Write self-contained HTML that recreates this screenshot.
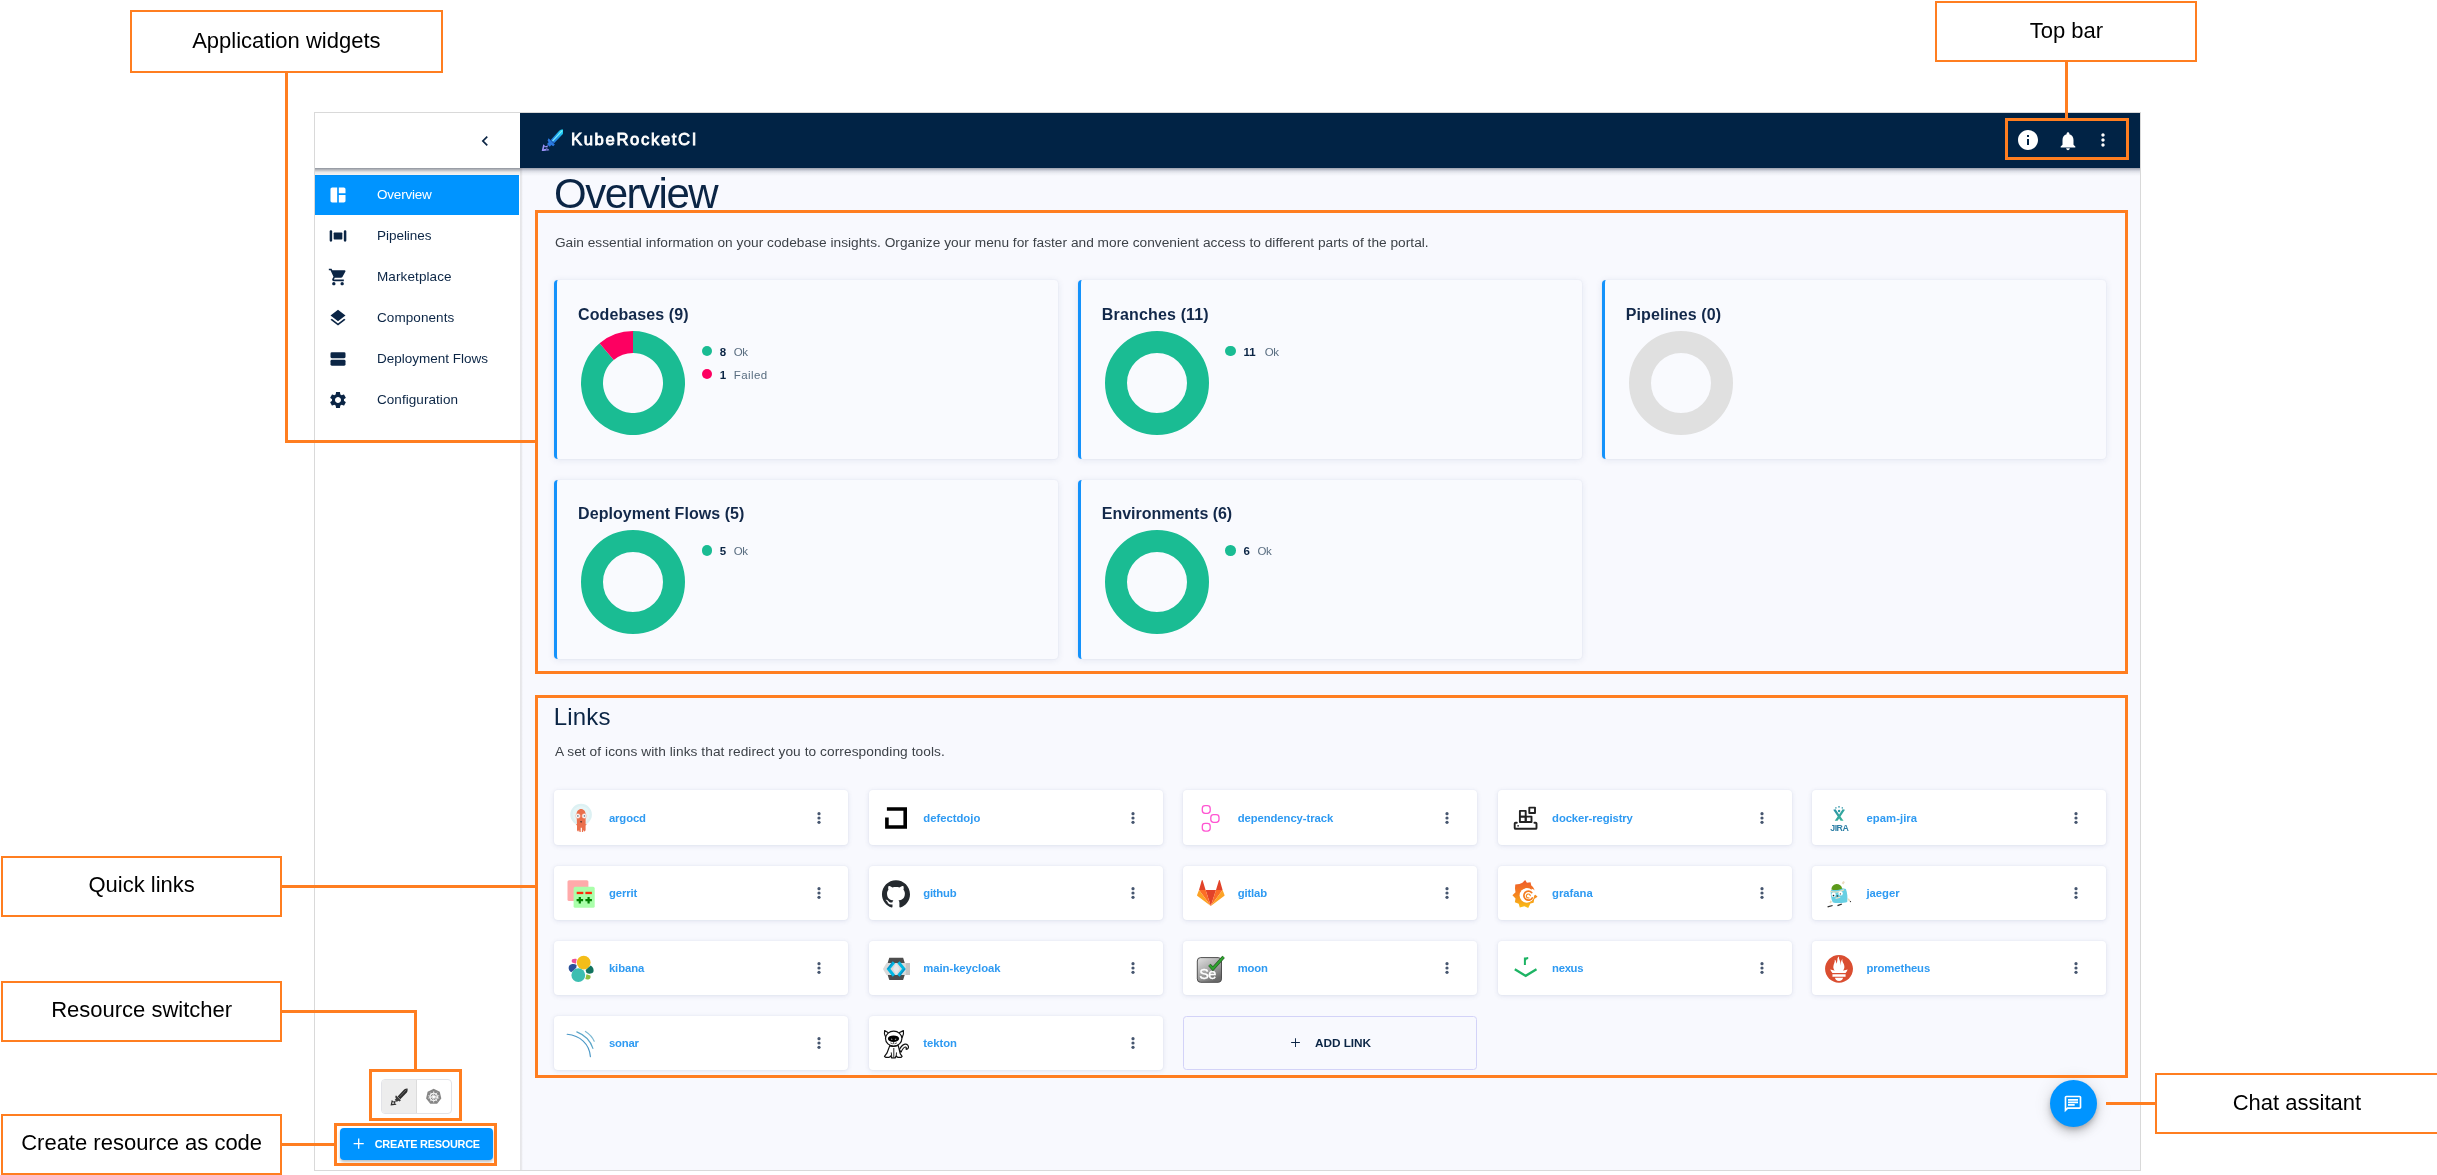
<!DOCTYPE html>
<html lang="en"><head><meta charset="utf-8"><title>KubeRocketCI Overview</title>
<style>
*{box-sizing:border-box;margin:0;padding:0}
html,body{width:2437px;height:1175px;background:#fff;overflow:hidden}
body{position:relative;font-family:"Liberation Sans",sans-serif;color:#0B2545;will-change:transform}
.abs{position:absolute}
.ann{position:absolute;border:2.4px solid #FF7E20;background:#fff;display:flex;align-items:center;justify-content:center;font-size:22px;color:#000;white-space:nowrap;padding-bottom:2.2px}
#a1{padding-bottom:.8px}
#a6{padding-bottom:0}
#a2{padding-bottom:.2px}
.ol{position:absolute;background:#FF7E20}
.ob{position:absolute;border:3px solid #FF7E20}
#app{position:absolute;left:314px;top:112px;width:1827px;height:1059px;border:1px solid #d9d9d9;background:#F8F9FE;overflow:hidden}
#side{position:absolute;left:0;top:0;width:205px;height:1057px;background:#fff}
#sideedge{position:absolute;left:204.9px;top:55px;width:3px;height:1002px;background:linear-gradient(to right,#E5E5E8 0,#E9E9EC 1.6px,#F3F4F9 2.4px,#F8F9FE 3px)}
#sidehead{position:absolute;left:0;top:0;width:205px;height:55px;background:#fff;}
#sideshadow{position:absolute;left:0;top:55px;width:205px;height:7.5px;background:linear-gradient(to bottom,rgba(66,74,90,.60) 0,rgba(70,78,92,.44) 1.4px,rgba(80,86,98,.30) 2.8px,rgba(0,0,0,.09) 4.1px,rgba(0,0,0,.06) 6px,rgba(0,0,0,.03) 7.5px)}
#topshadow{position:absolute;left:205px;top:55px;width:1620px;height:8px;background:linear-gradient(to bottom,rgba(40,50,75,.46) 0,rgba(40,50,75,.30) 1.5px,rgba(40,50,75,.14) 3.2px,rgba(40,50,75,.05) 5.5px,rgba(40,50,75,0) 8px)}
#top{position:absolute;left:205px;top:0;width:1620px;height:55px;background:#012345}
.mi{position:absolute;left:0;width:204px;height:40px;font-size:13.5px;color:#0B2545;line-height:40px;white-space:nowrap}
.mi span{position:absolute;left:62px;top:0}
.mi svg{position:absolute;left:13.4px;top:10.3px;width:20px;height:20px;fill:#0B2545}
.mi.sel{background:#0094FF;color:#fff}
.mi.sel svg{fill:#fff}
.t{position:absolute;white-space:nowrap;line-height:1}
.card{position:absolute;width:503.5px;height:179px;background:#F9FAFE;border-left:3px solid #1492FB;border-radius:4px;box-shadow:0 1px 7px rgba(40,60,120,.10),0 0 2px rgba(40,60,120,.07)}
.card .ttl{position:absolute;left:20.8px;top:24.6px;font-size:16px;font-weight:bold;color:#12284A;white-space:nowrap;line-height:20px}
.card svg.dn{position:absolute;left:23px;top:50px;width:106px;height:106px}
.lg{position:absolute;left:144px;height:14px;line-height:14px;font-size:11.5px;white-space:nowrap;color:#596D80}
.lg i{position:absolute;left:0.3px;top:1.9px;width:10.6px;height:10.6px;border-radius:50%}
.lg b{position:absolute;left:18.4px;top:0.9px;color:#0B2545;font-size:11.5px}
.lg span{position:absolute;top:0.9px}
.lk{position:absolute;width:294px;height:54.2px;background:#fff;border-radius:4px;box-shadow:0 1px 5px rgba(40,60,120,.12),0 0 2px rgba(40,60,120,.06)}
.lk .nm{position:absolute;left:54.5px;top:0.9px;line-height:54px;font-size:11.3px;font-weight:bold;color:#2E9AF2;white-space:nowrap}
.lk svg.dots{position:absolute;left:256.2px;top:19.4px;width:16px;height:16px;fill:#46566F}
.lk svg.ic{position:absolute;left:0;top:0;width:54px;height:54px}
</style></head>
<body>
<div id="app">
<div id="side">
<div class="mi sel" style="top:62.20px"><svg viewBox="0 0 24 24"><path d="M11 21H5c-1.1 0-2-.9-2-2V5c0-1.1.9-2 2-2h6v18zm2 0h6c1.1 0 2-.9 2-2v-7h-8v9zm8-11V5c0-1.1-.9-2-2-2h-6v7h8z"/></svg><span style="letter-spacing:-0.209px">Overview</span></div>
<div class="mi" style="top:103.05px"><svg viewBox="0 0 24 24"><rect x="2" y="5.2" width="3" height="13.6" rx="1.4"/><rect x="19" y="5.2" width="3" height="13.6" rx="1.4"/><rect x="6.8" y="7.8" width="10.4" height="8.4" rx="0.8"/></svg><span style="letter-spacing:-0.036px">Pipelines</span></div>
<div class="mi" style="top:143.90px"><svg viewBox="0 0 24 24"><path d="M7 18c-1.1 0-1.99.9-1.99 2S5.9 22 7 22s2-.9 2-2-.9-2-2-2zM1 2v2h2l3.6 7.59-1.35 2.45c-.16.28-.25.61-.25.96 0 1.1.9 2 2 2h12v-2H7.42c-.14 0-.25-.11-.25-.25l.03-.12.9-1.63h7.45c.75 0 1.41-.41 1.75-1.03l3.58-6.49c.08-.14.12-.31.12-.48 0-.55-.45-1-1-1H5.21l-.94-2H1zm16 16c-1.1 0-1.99.9-1.99 2s.89 2 1.99 2 2-.9 2-2-.9-2-2-2z"/></svg><span style="letter-spacing:0.107px">Marketplace</span></div>
<div class="mi" style="top:184.75px"><svg viewBox="0 0 24 24"><path d="M11.99 18.54l-7.37-5.73L3 14.07l9 7 9-7-1.63-1.27-7.38 5.74zM12 16l7.36-5.73L21 9l-9-7-9 7 1.63 1.27L12 16z"/></svg><span style="letter-spacing:0.084px">Components</span></div>
<div class="mi" style="top:225.60px"><svg viewBox="0 0 24 24"><rect x="3" y="4" width="18" height="7" rx="1.6"/><rect x="3" y="13" width="18" height="7" rx="1.6"/></svg><span style="letter-spacing:-0.009px">Deployment Flows</span></div>
<div class="mi" style="top:266.95px"><svg viewBox="0 0 24 24"><path d="M19.14 12.94c.04-.3.06-.61.06-.94 0-.32-.02-.64-.07-.94l2.03-1.58c.18-.14.23-.41.12-.61l-1.92-3.32c-.12-.22-.37-.29-.59-.22l-2.39.96c-.5-.38-1.03-.7-1.62-.94l-.36-2.54c-.04-.24-.24-.41-.48-.41h-3.84c-.24 0-.43.17-.47.41l-.36 2.54c-.59.24-1.13.57-1.62.94l-2.39-.96c-.22-.08-.47 0-.59.22L2.74 8.87c-.12.21-.08.47.12.61l2.03 1.58c-.05.3-.09.63-.09.94s.02.64.07.94l-2.03 1.58c-.18.14-.23.41-.12.61l1.92 3.32c.12.22.37.29.59.22l2.39-.96c.5.38 1.03.7 1.62.94l.36 2.54c.05.24.24.41.48.41h3.84c.24 0 .44-.17.47-.41l.36-2.54c.59-.24 1.13-.56 1.62-.94l2.39.96c.22.08.47 0 .59-.22l1.92-3.32c.12-.22.07-.47-.12-.61l-2.01-1.58zM12 15.6c-1.98 0-3.6-1.62-3.6-3.6s1.62-3.6 3.6-3.6 3.6 1.62 3.6 3.6-1.62 3.6-3.6 3.6z"/></svg><span style="letter-spacing:0.058px">Configuration</span></div>
<div id="sidehead"><svg class="abs" style="left:160.3px;top:18px;width:20px;height:20px" viewBox="0 0 24 24" fill="#0B2545"><path d="M15.41 7.41L14 6l-6 6 6 6 1.41-1.41L10.83 12z"/></svg></div>
<div id="sideshadow"></div>
</div>
<div class="t" id="h1" style="left:239.10000000000002px;top:59.5px;font-size:42px;color:#0B2545;letter-spacing:-1.5px">Overview</div>
<div class="t" id="desc" style="left:239.89999999999998px;top:122.80000000000001px;font-size:13.7px;letter-spacing:0.02px;color:#3d4248">Gain essential information on your codebase insights. Organize your menu for faster and more convenient access to different parts of the portal.</div>
<div class="card" style="left:239.29999999999995px;top:167px"><div class="abs" style="left:0;top:0px;width:100%;height:100%"><div class="ttl" style="letter-spacing:0.094px">Codebases (9)</div><svg class="dn" viewBox="0 0 106 106"><path d="M53.00 1.00A52 52 0 1 1 19.58 13.17L33.72 30.02A30 30 0 1 0 53.00 23.00Z" fill="#1ABC93"/><path d="M19.58 13.17A52 52 0 0 1 53.00 1.00L53.00 23.00A30 30 0 0 0 33.72 30.02Z" fill="#FD0061"/></svg><div class="lg" style="top:64px"><i style="background:#1ABC93"></i><b>8</b><span style="left:32.5px;letter-spacing:-0.395px">Ok</span></div><div class="lg" style="top:86.7px"><i style="background:#FD0061"></i><b>1</b><span style="left:32.5px;letter-spacing:0.416px">Failed</span></div></div></div>
<div class="card" style="left:763px;top:167px"><div class="abs" style="left:0;top:0px;width:100%;height:100%"><div class="ttl" style="letter-spacing:0.163px">Branches (11)</div><svg class="dn" viewBox="0 0 106 106"><circle cx="53" cy="53" r="41.0" fill="none" stroke="#1ABC93" stroke-width="22"/></svg><div class="lg" style="top:64px"><i style="background:#1ABC93"></i><b>11</b><span style="left:39.8px;letter-spacing:-0.395px">Ok</span></div></div></div>
<div class="card" style="left:1287px;top:167px"><div class="abs" style="left:0;top:0px;width:100%;height:100%"><div class="ttl" style="letter-spacing:0.087px">Pipelines (0)</div><svg class="dn" viewBox="0 0 106 106"><circle cx="53" cy="53" r="41.0" fill="none" stroke="#E0E0E0" stroke-width="22"/></svg></div></div>
<div class="card" style="left:239.29999999999995px;top:367px"><div class="abs" style="left:0;top:-0.9px;width:100%;height:100%"><div class="ttl" style="letter-spacing:0.045px">Deployment Flows (5)</div><svg class="dn" viewBox="0 0 106 106"><circle cx="53" cy="53" r="41.0" fill="none" stroke="#1ABC93" stroke-width="22"/></svg><div class="lg" style="top:64px"><i style="background:#1ABC93"></i><b>5</b><span style="left:32.5px;letter-spacing:-0.395px">Ok</span></div></div></div>
<div class="card" style="left:763px;top:367px"><div class="abs" style="left:0;top:-0.9px;width:100%;height:100%"><div class="ttl" style="letter-spacing:-0.019px">Environments (6)</div><svg class="dn" viewBox="0 0 106 106"><circle cx="53" cy="53" r="41.0" fill="none" stroke="#1ABC93" stroke-width="22"/></svg><div class="lg" style="top:64px"><i style="background:#1ABC93"></i><b>6</b><span style="left:32.5px;letter-spacing:-0.395px">Ok</span></div></div></div>
<div class="t" id="h2" style="left:238.70000000000005px;top:592px;font-size:24px;letter-spacing:0.2px;color:#0B2545">Links</div>
<div class="t" id="desc2" style="left:239.89999999999998px;top:632.3px;font-size:13.7px;letter-spacing:0.074px;color:#3d4248">A set of icons with links that redirect you to corresponding tools.</div>
<div class="lk" style="left:239.4px;top:676.9px;height:55.1px"><svg class="ic" style="top:0.1px" viewBox="0 0 54 54"><circle cx="27.1" cy="24.6" r="10.8" fill="#DDF1F3"/><circle cx="27.1" cy="24.6" r="8.6" fill="#E6F5F6"/>
<path d="M22.6 24.5c0-3.2 1.9-5.5 4.5-5.5s4.5 2.3 4.5 5.5v9.8h1.3l-1.3 1.1v4.8l-1.1 1.5-.9-1.6-.6 1.8h-1.1v-4.2h-1.2v4.2h-1.1l-.6-1.8-.9 1.6-1.1-1.5v-4.8l-1.3-1.1h1.3z" fill="#EA6F4C"/>
<circle cx="23.9" cy="26" r="2.3" fill="#fff" stroke="#F6B7A6" stroke-width=".6"/><circle cx="30.3" cy="26" r="2.3" fill="#fff" stroke="#F6B7A6" stroke-width=".6"/>
<rect x="23.1" y="25.1" width="1.5" height="1.7" fill="#7b8794"/><rect x="29.7" y="25.1" width="1.5" height="1.7" fill="#7b8794"/>
<path d="M26 31.2h2.2l-1.1 1.7z" fill="#3a2a2a"/></svg><div class="nm" style="top:1.0px;letter-spacing:-0.115px">argocd</div><svg class="dots" style="top:20.15px" viewBox="0 0 16 16"><circle cx="8" cy="3.7" r="1.6"/><circle cx="8" cy="8" r="1.6"/><circle cx="8" cy="12.3" r="1.6"/></svg></div>
<div class="lk" style="left:553.8px;top:676.9px;height:55.1px"><svg class="ic" style="top:0.1px" viewBox="0 0 54 54"><path d="M17.9 19H36.2V37H17.9V27.6" fill="none" stroke="#000" stroke-width="3.6" stroke-linejoin="miter"/></svg><div class="nm" style="top:1.0px;letter-spacing:-0.014px">defectdojo</div><svg class="dots" style="top:20.15px" viewBox="0 0 16 16"><circle cx="8" cy="3.7" r="1.6"/><circle cx="8" cy="8" r="1.6"/><circle cx="8" cy="12.3" r="1.6"/></svg></div>
<div class="lk" style="left:868.2px;top:676.9px;height:55.1px"><svg class="ic" style="top:0.1px" viewBox="0 0 54 54"><g fill="none" stroke="#FF55D2" stroke-width="1.3"><rect x="19.3" y="15.7" width="7.9" height="7.7" rx="2.8"/><rect x="27.8" y="24.6" width="8.2" height="7.7" rx="2.8"/><rect x="19.3" y="33.4" width="7.9" height="7.7" rx="2.8"/></g></svg><div class="nm" style="top:1.0px;letter-spacing:-0.081px">dependency-track</div><svg class="dots" style="top:20.15px" viewBox="0 0 16 16"><circle cx="8" cy="3.7" r="1.6"/><circle cx="8" cy="8" r="1.6"/><circle cx="8" cy="12.3" r="1.6"/></svg></div>
<div class="lk" style="left:1182.6px;top:676.9px;height:55.1px"><svg class="ic" style="top:0.1px" viewBox="0 0 54 54"><g fill="none" stroke="#222" stroke-width="1.9" stroke-linejoin="round" stroke-linecap="round"><path d="M18.8 32.7h-1.2a.9.9 0 0 0-.9.9v4.3a.9.9 0 0 0 .9.9h20a.9.9 0 0 0 .9-.9v-4.3a.9.9 0 0 0-.9-.9h-1.2"/><rect x="21.9" y="20.9" width="5.8" height="5.7"/><rect x="21.9" y="26.6" width="5.8" height="5.4"/><rect x="27.7" y="26.6" width="5.8" height="5.4"/><rect x="31.3" y="17.6" width="5.7" height="5.4"/></g><circle cx="20.1" cy="35.8" r=".9" fill="#222"/></svg><div class="nm" style="top:1.0px;letter-spacing:-0.105px">docker-registry</div><svg class="dots" style="top:20.15px" viewBox="0 0 16 16"><circle cx="8" cy="3.7" r="1.6"/><circle cx="8" cy="8" r="1.6"/><circle cx="8" cy="12.3" r="1.6"/></svg></div>
<div class="lk" style="left:1497.0px;top:676.9px;height:55.1px"><svg class="ic" style="top:0.1px" viewBox="0 0 54 54"><defs><linearGradient id="jg" x1="0" y1="0" x2="1" y2="1"><stop offset="0" stop-color="#2A8FA9"/><stop offset="1" stop-color="#3DBB96"/></linearGradient></defs>
<path d="M21.2 19.8l2.4-.6 3.5 5.3 3.5-5.3 2.4.6-4.5 6.8 3 4.2h-2.9l-1.5-2.3-1.5 2.3h-2.9l3-4.2z" fill="url(#jg)"/><circle cx="27.1" cy="21" r="1.2" fill="#2A9DA8"/>
<circle cx="23.9" cy="17.9" r=".8" fill="#4BA5B5"/><circle cx="27" cy="16.8" r=".9" fill="#3E9CB0"/><circle cx="30.3" cy="17.9" r=".8" fill="#4BA5B5"/>
<text x="27.3" y="40.9" text-anchor="middle" font-family="Liberation Sans, sans-serif" font-size="8.8" font-weight="bold" fill="#2D7FA6" letter-spacing="-.5">JIRA</text></svg><div class="nm" style="top:1.0px;letter-spacing:0.045px">epam-jira</div><svg class="dots" style="top:20.15px" viewBox="0 0 16 16"><circle cx="8" cy="3.7" r="1.6"/><circle cx="8" cy="8" r="1.6"/><circle cx="8" cy="12.3" r="1.6"/></svg></div>
<div class="lk" style="left:239.4px;top:752.8px;height:54.2px"><svg class="ic" style="top:0.1px" viewBox="0 0 54 54"><rect x="13.5" y="14.2" width="20.9" height="20.9" rx="1.6" fill="#FFAAAA"/><rect x="19.6" y="20.8" width="21.1" height="21" rx="1.6" fill="#AAFFAA"/>
<rect x="22.7" y="25.8" width="6.6" height="2.3" fill="#FF2A0A"/><rect x="31.4" y="25.8" width="6.5" height="2.3" fill="#FF2A0A"/>
<path d="M22.6 33.1h2.1v-2.2h2.2v2.2h2.2v2.2h-2.2v2.2h-2.2v-2.2h-2.1zM31.4 33.1h2.1v-2.2h2.2v2.2h2.2v2.2h-2.2v2.2h-2.2v-2.2h-2.1z" fill="#007F00"/></svg><div class="nm" style="top:0.1px;letter-spacing:-0.097px">gerrit</div><svg class="dots" style="top:19.70px" viewBox="0 0 16 16"><circle cx="8" cy="3.7" r="1.6"/><circle cx="8" cy="8" r="1.6"/><circle cx="8" cy="12.3" r="1.6"/></svg></div>
<div class="lk" style="left:553.8px;top:752.8px;height:54.2px"><svg class="ic" style="top:0.1px" viewBox="0 0 54 54"><g transform="translate(12.95 13.8) scale(1.169)"><path d="M12 .297c-6.63 0-12 5.373-12 12 0 5.303 3.438 9.8 8.205 11.385.6.113.82-.258.82-.577 0-.285-.01-1.04-.015-2.04-3.338.724-4.042-1.61-4.042-1.61C4.422 18.07 3.633 17.7 3.633 17.7c-1.087-.744.084-.729.084-.729 1.205.084 1.838 1.236 1.838 1.236 1.07 1.835 2.809 1.305 3.495.998.108-.776.417-1.305.76-1.605-2.665-.3-5.466-1.332-5.466-5.93 0-1.31.465-2.38 1.235-3.22-.135-.303-.54-1.523.105-3.176 0 0 1.005-.322 3.3 1.23.96-.267 1.98-.399 3-.405 1.02.006 2.04.138 3 .405 2.28-1.552 3.285-1.23 3.285-1.23.645 1.653.24 2.873.12 3.176.765.84 1.23 1.91 1.23 3.22 0 4.61-2.805 5.625-5.475 5.92.42.36.81 1.096.81 2.22 0 1.606-.015 2.896-.015 3.286 0 .315.21.69.825.57C20.565 22.092 24 17.592 24 12.297c0-6.627-5.373-12-12-12" fill="#24292E"/></g></svg><div class="nm" style="top:0.1px;letter-spacing:-0.243px">github</div><svg class="dots" style="top:19.70px" viewBox="0 0 16 16"><circle cx="8" cy="3.7" r="1.6"/><circle cx="8" cy="8" r="1.6"/><circle cx="8" cy="12.3" r="1.6"/></svg></div>
<div class="lk" style="left:868.2px;top:752.8px;height:54.2px"><svg class="ic" style="top:0.1px" viewBox="0 0 54 54"><path d="M27.8 40L22.6 23.9H33z" fill="#E24329"/><path d="M27.8 40L22.6 23.9H16z" fill="#FC6D26"/><path d="M16 23.9l-1.9 5a1.1 1.1 0 0 0 .4 1.2L27.8 40z" fill="#FCA326"/><path d="M16 23.9h6.6L19.7 14.6a.5.5 0 0 0-1 0z" fill="#E24329"/>
<path d="M27.8 40L33 23.9h6.6z" fill="#FC6D26"/><path d="M39.6 23.9l1.9 5a1.1 1.1 0 0 1-.4 1.2L27.8 40z" fill="#FCA326"/><path d="M39.6 23.9H33l2.9-9.3a.5.5 0 0 1 1 0z" fill="#E24329"/></svg><div class="nm" style="top:0.1px;letter-spacing:-0.146px">gitlab</div><svg class="dots" style="top:19.70px" viewBox="0 0 16 16"><circle cx="8" cy="3.7" r="1.6"/><circle cx="8" cy="8" r="1.6"/><circle cx="8" cy="12.3" r="1.6"/></svg></div>
<div class="lk" style="left:1182.6px;top:752.8px;height:54.2px"><svg class="ic" style="top:0.1px" viewBox="0 0 54 54"><defs><linearGradient id="gg" x1="0" y1="0" x2="0" y2="1"><stop offset="0" stop-color="#EE5A2B"/><stop offset=".5" stop-color="#F58220"/><stop offset="1" stop-color="#F9C016"/></linearGradient></defs>
<g transform="matrix(1.096 0 0 1.037 -4.41 -.51)"><path d="M28.8 14l1.6 2.6 3.3-.4.7 3c1.6 1.2 2.6 2.9 3 4.9l-1 2.3 3.7 3.7-3 2.2-.6 3.7-2.9.6-2 4.4-3.5-1.6-4.2 1.2-1-3.6-3.5-1.5.6-3.7-2.8-3 2.8-3-.5-3.5.3-4 3.8-.4 2.7-1.3z" fill="url(#gg)"/></g>
<circle cx="28.9" cy="29.4" r="7.3" fill="#fff"/><path d="M33.5 22.8c2.3.5 4.3 2.1 5.3 4.3l-1.9 2.3-3.1-1.7z" fill="#fff"/>
<path d="M34.3 31.9a4.5 4.5 0 1 1-.6-5.3" fill="none" stroke="#F47B20" stroke-width="1.7" stroke-linecap="round"/><path d="M32.3 29.6a2 2 0 1 0-1.3 2.3" fill="none" stroke="#F58A1F" stroke-width="1.2" stroke-linecap="round"/></svg><div class="nm" style="top:0.1px;letter-spacing:-0.037px">grafana</div><svg class="dots" style="top:19.70px" viewBox="0 0 16 16"><circle cx="8" cy="3.7" r="1.6"/><circle cx="8" cy="8" r="1.6"/><circle cx="8" cy="12.3" r="1.6"/></svg></div>
<div class="lk" style="left:1497.0px;top:752.8px;height:54.2px"><svg class="ic" style="top:0.1px" viewBox="0 0 54 54"><path d="M18.9 24.3c3.4-2.2 12-2.8 15-1.3 1.4 3.5 2 9.3 1.3 13-3.5 1.3-11 1.5-14.5.2-1.6-3.3-2.3-8.4-1.8-11.9z" fill="#67CFE3"/>
<path d="M19.3 23.4c.4-3.3 2.7-5.4 5.3-5.3 2.7.1 5 1.8 5.6 4.3-3 1.6-7.6 2-10.9 1z" fill="#5C9A1B"/><path d="M18.2 24.7c3.7 1.3 9.4.8 13.6-1.7l.4 1.2c-4 2.5-9.8 3.1-13.8 1.9z" fill="#E9DCC0"/>
<circle cx="21.6" cy="28.7" r="2.2" fill="#fff"/><circle cx="28.6" cy="27.4" r="2.2" fill="#fff"/><circle cx="21.5" cy="29.6" r=".8" fill="#222"/><circle cx="28.4" cy="27.9" r=".7" fill="#555"/><ellipse cx="25.4" cy="30" rx="1" ry=".7" fill="#3a3a3a"/><path d="M23.3 31.7l4.8-1 .2 1-4.6 1.2z" fill="#EFE3CA"/>
<path d="M29.7 17.2l1.5-2.1 1.7 1-1.5 2.5zM35.2 32.3l2 .4 1.5 2.7-1.8-.2zM18.7 34.2l-1.2 2.4 1.5 1 .8-2z" fill="#EADBBE"/><circle cx="38.5" cy="35.6" r=".6" fill="#222"/>
<path d="M15.4 40.3l5-1.4.4 1-5 1.5zM25.2 39.1l4.3-1.7.7 1.2-4.4 1.6z" fill="#333"/></svg><div class="nm" style="top:0.1px;letter-spacing:-0.039px">jaeger</div><svg class="dots" style="top:19.70px" viewBox="0 0 16 16"><circle cx="8" cy="3.7" r="1.6"/><circle cx="8" cy="8" r="1.6"/><circle cx="8" cy="12.3" r="1.6"/></svg></div>
<div class="lk" style="left:239.4px;top:827.8px;height:54.2px"><svg class="ic" style="top:0.2px" viewBox="0 0 54 54"><circle cx="29.7" cy="21.6" r="6.9" fill="#F4BD19"/><circle cx="24.3" cy="34.1" r="6.9" fill="#3CBEB1"/>
<path d="M18.4 18.3c1.2-.7 2.9-.8 4.3-.3l-.8 4.8-3.6-1.3c-.8-1-.8-2.4.1-3.2z" fill="#EE5097"/>
<path d="M15.1 25c1.5-2.2 5.3-2.6 7.5-.9l-.3 2.7-5 4.4c-2.2-1-3.3-4-2.2-6.2z" fill="#2B5099"/>
<path d="M36.7 24.5c2.3 1.2 3.5 4.2 2.7 6.6-1.5 2-4.7 2.2-7 .7l-.8-2.8z" fill="#12735E"/>
<path d="M32.5 33.3l3.8 1.1c.6 1.2.3 2.7-.8 3.5-1.4.7-3 .7-4.2.1z" fill="#8FBF3F"/></svg><div class="nm" style="top:0.1px;letter-spacing:-0.06px">kibana</div><svg class="dots" style="top:19.70px" viewBox="0 0 16 16"><circle cx="8" cy="3.7" r="1.6"/><circle cx="8" cy="8" r="1.6"/><circle cx="8" cy="12.3" r="1.6"/></svg></div>
<div class="lk" style="left:553.8px;top:827.8px;height:54.2px"><svg class="ic" style="top:0.2px" viewBox="0 0 54 54"><path d="M20.3 16.8h13.8l3.6 11.1-3.6 11.1H20.3l-3.6-11.1z" fill="#4D4D4D"/>
<path d="M13.9 27.9l3.6-5.9H41v12H17.5z" fill="#D9D9D9"/><path d="M36.8 22H41v12h-4.2z" fill="#C4C4C4"/><path d="M27.2 22.6l3.4 5.3-3.4 5.3-3.4-5.3z" fill="#E8E8E8"/>
<path d="M24.9 21.3l-5.4 6.6 5.4 6.8" fill="none" stroke="#00B8E3" stroke-width="3"/><path d="M29.5 21.3l5.4 6.6-5.4 6.8" fill="none" stroke="#00B8E3" stroke-width="3"/>
<path d="M23.4 21.8l-4.7 6.1" fill="none" stroke="#0B8DC4" stroke-width="1.1"/><path d="M31 34.2l4.7-6.3" fill="none" stroke="#0B8DC4" stroke-width="1.1"/></svg><div class="nm" style="top:0.1px;letter-spacing:-0.057px">main-keycloak</div><svg class="dots" style="top:19.70px" viewBox="0 0 16 16"><circle cx="8" cy="3.7" r="1.6"/><circle cx="8" cy="8" r="1.6"/><circle cx="8" cy="12.3" r="1.6"/></svg></div>
<div class="lk" style="left:868.2px;top:827.8px;height:54.2px"><svg class="ic" style="top:0.2px" viewBox="0 0 54 54"><defs><linearGradient id="sg" x1="0" y1="0" x2=".6" y2="1"><stop offset="0" stop-color="#E3E3E3"/><stop offset=".55" stop-color="#A9A9A9"/><stop offset="1" stop-color="#6A6A6A"/></linearGradient></defs>
<rect x="14.3" y="16.6" width="24.2" height="24.7" rx="3.4" fill="url(#sg)" stroke="#4f4f4f" stroke-width="1"/>
<text x="16.2" y="38.3" font-family="Liberation Sans, sans-serif" font-size="14.5" fill="#fff" stroke="#fff" stroke-width=".35" letter-spacing="-.6">Se</text>
<path d="M26.4 23.9l3.5 3.8L40.6 15.9" fill="none" stroke="#2a5a2a" stroke-width="3.3"/><path d="M26.4 23.9l3.5 3.8L40.6 15.9" fill="none" stroke="#2FA42F" stroke-width="2.1"/></svg><div class="nm" style="top:0.1px;letter-spacing:-0.185px">moon</div><svg class="dots" style="top:19.70px" viewBox="0 0 16 16"><circle cx="8" cy="3.7" r="1.6"/><circle cx="8" cy="8" r="1.6"/><circle cx="8" cy="12.3" r="1.6"/></svg></div>
<div class="lk" style="left:1182.6px;top:827.8px;height:54.2px"><svg class="ic" style="top:0.2px" viewBox="0 0 54 54"><path d="M16.8 28.2l10.9 6.6 10.8-6.6" fill="none" stroke="#1DB464" stroke-width="2.3"/><path d="M26.9 23.9v-7.5M26.9 19.5c.3-1.4 1.7-2.3 3.3-2.4" fill="none" stroke="#1DB464" stroke-width="2"/></svg><div class="nm" style="top:0.1px;letter-spacing:-0.315px">nexus</div><svg class="dots" style="top:19.70px" viewBox="0 0 16 16"><circle cx="8" cy="3.7" r="1.6"/><circle cx="8" cy="8" r="1.6"/><circle cx="8" cy="12.3" r="1.6"/></svg></div>
<div class="lk" style="left:1497.0px;top:827.8px;height:54.2px"><svg class="ic" style="top:0.2px" viewBox="0 0 54 54"><g transform="translate(13.05 13.9) scale(1.164)"><path d="M12 0C5.373 0 0 5.372 0 12c0 6.627 5.373 12 12 12s12-5.373 12-12c0-6.628-5.373-12-12-12zm0 22.46c-1.885 0-3.414-1.26-3.414-2.814h6.828c0 1.553-1.528 2.813-3.414 2.813zm5.64-3.745H6.36v-2.046h11.28v2.046zm-.04-3.098H6.391c-.037-.043-.075-.086-.111-.13-1.155-1.401-1.427-2.133-1.69-2.879-.005-.025 1.4.287 2.395.511 0 0 .513.119 1.262.255-.72-.843-1.147-1.915-1.147-3.01 0-2.406 1.845-4.508 1.18-6.207.648.053 1.34 1.367 1.387 3.422.689-.951.977-2.69.977-3.755 0-1.103.727-2.385 1.454-2.429-.648 1.069.168 1.984.894 4.256.272.854.237 2.29.447 3.201.07-1.892.395-4.652 1.595-5.605-.529 1.2.079 2.702.494 3.424.671 1.164 1.078 2.047 1.078 3.716 0 1.119-.413 2.173-1.11 2.996.792-.149 1.34-.283 1.34-.283l2.573-.502s-.374 1.538-1.81 3.019z" fill="#DA4E31"/></g></svg><div class="nm" style="top:0.1px;letter-spacing:-0.108px">prometheus</div><svg class="dots" style="top:19.70px" viewBox="0 0 16 16"><circle cx="8" cy="3.7" r="1.6"/><circle cx="8" cy="8" r="1.6"/><circle cx="8" cy="12.3" r="1.6"/></svg></div>
<div class="lk" style="left:239.4px;top:902.8px;height:54.2px"><svg class="ic" style="top:0.2px" viewBox="0 0 54 54"><g fill="none" stroke="#4A97C6" stroke-width="1.15" stroke-linecap="round"><path d="M13.2 18.3C26 19.5 35.4 28 36.4 40.6"/><path d="M22.8 15.9c8.1 3.2 13.7 9 16.1 16.5" stroke="#5AA5C8"/><path d="M31.4 15.4c4.1 2.5 7.2 6 8.8 9.9" stroke="#7DB9D3"/></g></svg><div class="nm" style="top:0.1px;letter-spacing:-0.193px">sonar</div><svg class="dots" style="top:19.70px" viewBox="0 0 16 16"><circle cx="8" cy="3.7" r="1.6"/><circle cx="8" cy="8" r="1.6"/><circle cx="8" cy="12.3" r="1.6"/></svg></div>
<div class="lk" style="left:553.8px;top:902.8px;height:54.2px"><svg class="ic" style="top:0.2px" viewBox="0 0 54 54"><g fill="#fff" stroke="#111" stroke-width="1.2" stroke-linejoin="round" stroke-linecap="round">
<path d="M30.4 33.5c1.5-2.6 3.4-5 5.6-5.3 2.3-.3 3.9 1.6 3.4 3.5-.3 1.3-1.5 1.9-2.4 1.4.7-1.1.3-2.2-.8-2.1-1.7.2-3 2.7-4.3 5.2z"/>
<path d="M15.6 14.6l4.6 2.6-3.3 4.4c-1.3-2-1.9-4.6-1.3-7zM34.4 14.6l-4.8 2.4 3.5 4.6c1.3-2.1 1.8-4.6 1.3-7z"/>
<ellipse cx="24.7" cy="22.6" rx="8.2" ry="7.4"/>
<path d="M20.9 29.4l-3 7.8-2.4 3.2 1.5 1h3.2l1.6-1.4.9 1.9h3.5l1-1.8 1.7 1.3h3.2l1-1.1-1.9-2.6-2-8.4c-2.8 1.5-5.9 1.5-8.3.1z"/>
<path d="M24.8 32.4v8.4M22.3 36.8l.4 3.6M27.5 36.8l-.3 3.6" fill="none" stroke-width=".9"/></g>
<ellipse cx="24.5" cy="22.7" rx="5.6" ry="3.3" fill="#000"/><path d="M22 23.1l1.3.3M27.2 23.1l-1.3.3" stroke="#fff" stroke-width=".7"/>
<path d="M24.6 25.5v2.6M21.4 26.9l2.3.9M27.9 26.9l-2.3.9" stroke="#111" stroke-width=".7" fill="none"/></svg><div class="nm" style="top:0.1px;letter-spacing:-0.06px">tekton</div><svg class="dots" style="top:19.70px" viewBox="0 0 16 16"><circle cx="8" cy="3.7" r="1.6"/><circle cx="8" cy="8" r="1.6"/><circle cx="8" cy="12.3" r="1.6"/></svg></div>
<div class="abs" style="left:868.2px;top:902.9px;width:293.7px;height:54.4px;border:1px solid #D3D3F8;border-radius:3.5px;background:#F8F9FE"><svg class="abs" style="left:104px;top:18.4px;width:15px;height:15px" viewBox="0 0 24 24" fill="#0B2545"><path d="M19 12.750h-6.250V19h-1.5v-6.250H5v-1.5h6.250V5h1.5v6.250H19z"/></svg><div class="t" id="addlink" style="left:130.8px;top:21.5px;font-size:11.8px;letter-spacing:-0.039px;font-weight:bold;color:#0B2545">ADD LINK</div></div>
<div class="abs" style="left:1734.8px;top:967.0px;width:47.2px;height:47.2px;border-radius:50%;background:#0094FF;box-shadow:0 3px 5px -1px rgba(0,0,0,.2),0 6px 10px 0 rgba(0,0,0,.14),0 1px 18px 0 rgba(0,0,0,.12)"><svg class="abs" style="left:13.6px;top:13.6px;width:20px;height:20px" viewBox="0 0 24 24" fill="#fff"><path d="M4 4h16v12H5.170L4 17.170V4m0-2c-1.1 0-1.990.9-1.990 2L2 22l4-4h14c1.1 0 2-.9 2-2V4c0-1.1-.9-2-2-2H4zm2 10h8v2H6v-2zm0-3h12v2H6V9zm0-3h12v2H6V6z"/></svg></div>
<div class="abs" style="left:65.89999999999998px;top:965.9000000000001px;width:71px;height:35.6px;border:1px solid #e2e3e8;border-radius:4px;background:#fff;overflow:hidden"><div class="abs" style="left:0;top:0;width:35.5px;height:35.6px;background:#EDEDED;border-right:1px solid #dcdcdc"></div><svg class="abs" style="left:8.2px;top:7.9px;width:17.8px;height:17.8px" viewBox="0 0 24 24"><path d="M23.6.6c.4 1.7.1 3.7-.9 5.3L13.9 15.2l-3.6-3.6L19.1 2.1C20.4 1 22 .5 23.6.6z" fill="#2b2b2b"/><path d="M22 2.3 13 11.9" stroke="#777" stroke-width="1" fill="none"/><path d="M8 9.8l6.7 6.7-1.7 1.7-2-1.1-1.7 1.7-2.9-2.9 1.7-1.7-1.1-2z" fill="#3a3a3a"/><path d="M.7 23.6l1.7-7.4 2.3 2.1 3.2-1-1.1 3.2 2.1 2.2z" fill="#333"/><path d="M2.8 21.5l1-3 2.4 2.3z" fill="#EDEDED"/></svg><svg class="abs" style="left:43.2px;top:8.3px;width:17.4px;height:17.4px" viewBox="0 0 24 24"><path d="M12 1.2l8.4 4.050 2.080 9.1-5.810 7.290H7.330l-5.810-7.290L3.6 5.250z" fill="#868686"/><circle cx="12" cy="12.3" r="5.3" fill="none" stroke="#fff" stroke-width="1.3"/><circle cx="12" cy="12.3" r="1.6" fill="#fff"/><path d="M12 4.6v15.4M4.5 10.6l15 3.4M4.5 14l15-3.4M7.2 18.3l9.6-12M7.2 6.3l9.6 12" stroke="#fff" stroke-width="1" fill="none"/></svg></div>
<div class="abs" style="left:25.3px;top:1015.3px;width:153.2px;height:31.3px;border-radius:4px;background:#0094FF;box-shadow:0 2px 3px rgba(0,0,0,.25)"><svg class="abs" style="left:9.3px;top:7.2px;width:17.4px;height:17.4px" viewBox="0 0 24 24" fill="#fff"><path d="M19 12.9h-6.1V19h-1.8v-6.1H5v-1.8h6.1V5h1.8v6.1H19z"/></svg><div class="t" id="crbtn" style="left:34.4px;top:10.3px;font-size:10.9px;letter-spacing:-0.236px;font-weight:bold;color:#fff">CREATE RESOURCE</div></div>
<div id="sideedge"></div>
<div id="topshadow"></div>
<div id="top"><svg class="abs" style="left:20.8px;top:15.7px;width:22.6px;height:22.6px" viewBox="0 0 24 24">
<defs><linearGradient id="rk" x1="1" y1="0" x2="0" y2="1"><stop offset="0" stop-color="#1FE0F5"/><stop offset=".5" stop-color="#1E9BEA"/><stop offset="1" stop-color="#2C6FE0"/></linearGradient></defs>
<path d="M23.6.6c.4 1.7.1 3.7-.9 5.3L13.9 15.2l-3.6-3.6L19.1 2.1C20.4 1 22 .5 23.6.6z" fill="url(#rk)"/>
<path d="M22.3 2 12.6 12.3" stroke="#7DF0FA" stroke-width="1.3" fill="none" stroke-linecap="round"/>
<path d="M8 9.8l6.7 6.7-1.7 1.7-2-1.1-1.7 1.7-2.9-2.9 1.7-1.7-1.1-2z" fill="#2A78E0"/>
<path d="M.7 23.6l1.7-7.4 2.3 2.1 3.2-1-1.1 3.2 2.1 2.2z" fill="#9A93F7"/>
<path d="M2.8 21.5l1-3 2.4 2.3z" fill="#012345"/><path d="M3.6 20.7l4-1.8-1.8 3.9" fill="none" stroke="#012345" stroke-width=".7"/>
</svg>
<div class="t" style="left:50.9px;top:19.4px;font-size:16.7px;color:#fff;-webkit-text-stroke:.8px #fff;letter-spacing:1.629px" id="brand">KubeRocketCI</div>
<svg class="abs" style="left:1496.3px;top:15.199999999999989px;width:24px;height:24px" viewBox="0 0 24 24" fill="#fff"><path d="M12 2C6.48 2 2 6.48 2 12s4.480 10 10 10 10-4.480 10-10S17.520 2 12 2zm1 15h-2v-6h2v6zm0-8h-2V7h2v2z"/></svg>
<svg class="abs" style="left:1537.4px;top:16.599999999999994px;width:22px;height:22px" viewBox="0 0 24 24" fill="#fff"><path d="M12 22c1.1 0 2-.9 2-2h-4c0 1.1.89 2 2 2zm6-6v-5c0-3.070-1.640-5.640-4.5-6.320V4c0-.83-.67-1.5-1.5-1.5s-1.5.67-1.5 1.5v.68C7.630 5.360 6 7.920 6 11v5l-2 2v1h16v-1l-2-2z"/></svg>
<svg class="abs" style="left:1573.0px;top:17.0px;width:20px;height:20px" viewBox="0 0 24 24" fill="#fff"><path d="M12 8c1.1 0 2-.9 2-2s-.9-2-2-2-2 .9-2 2 .9 2 2 2zm0 2c-1.1 0-2 .9-2 2s.9 2 2 2 2-.9 2-2-.9-2-2-2zm0 6c-1.1 0-2 .9-2 2s.9 2 2 2 2-.9 2-2-.9-2-2-2z"/></svg></div>
</div>
<div class="ol" style="left:285px;top:70px;width:3px;height:372px"></div>
<div class="ol" style="left:285px;top:440px;width:252px;height:3px"></div>
<div class="ol" style="left:2065px;top:61px;width:3px;height:58px"></div>
<div class="ol" style="left:282px;top:885px;width:255px;height:3px"></div>
<div class="ol" style="left:282px;top:1010px;width:135px;height:3px"></div>
<div class="ol" style="left:414px;top:1010px;width:3px;height:60px"></div>
<div class="ol" style="left:282px;top:1143px;width:54px;height:3px"></div>
<div class="ol" style="left:2106.4px;top:1102px;width:50px;height:3px"></div>
<div class="ob" style="left:535px;top:210px;width:1593px;height:463.5px;border-width:3px"></div>
<div class="ob" style="left:535px;top:694.6px;width:1593px;height:383.19999999999993px;border-width:3px"></div>
<div class="ob" style="left:2005px;top:117.5px;width:124px;height:42.0px;border-width:3px"></div>
<div class="ob" style="left:369px;top:1069px;width:92.80000000000001px;height:51.5px;border-width:3px"></div>
<div class="ob" style="left:334.1px;top:1123.3px;width:162.79999999999995px;height:42.40000000000009px;border-width:3px"></div>
<div class="ann" id="a1" style="left:130px;top:10px;width:312.7px;height:62.5px">Application widgets</div>
<div class="ann" id="a2" style="left:1935.4px;top:0.8px;width:261.9px;height:61.2px">Top bar</div>
<div class="ann" id="a3" style="left:0.8px;top:856px;width:281.7px;height:60.6px">Quick links</div>
<div class="ann" id="a4" style="left:0.8px;top:981.4px;width:281.7px;height:60.4px">Resource switcher</div>
<div class="ann" id="a5" style="left:0.8px;top:1114.3px;width:281.7px;height:60.5px">Create resource as code</div>
<div class="ann" id="a6" style="left:2154.9px;top:1072.8px;width:284px;height:61px">Chat assitant</div>
</body></html>
